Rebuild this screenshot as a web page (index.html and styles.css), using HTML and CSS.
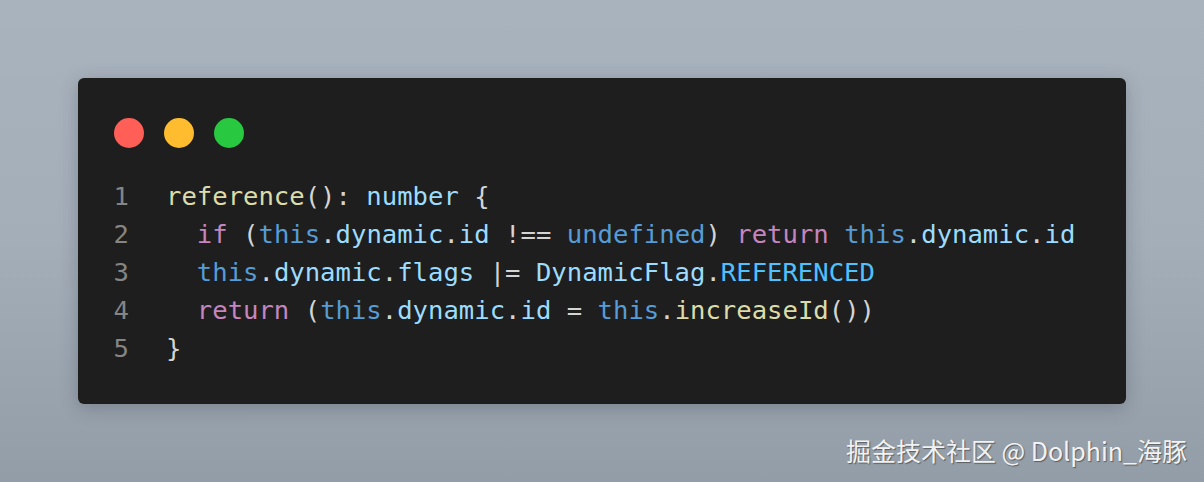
FILE: index.html
```html
<!DOCTYPE html>
<html lang="zh">
<head>
<meta charset="utf-8">
<title>code</title>
<link rel="stylesheet" href="styles.css">
</head>
<body>
<div class="stage">
  <div class="card">
    <div class="dots">
      <span class="dot red"></span>
      <span class="dot yellow"></span>
      <span class="dot green"></span>
    </div>
    <div class="code">
      <div class="line"><span class="ln">1</span><span class="src"><span class="fn">reference</span><span class="p">():</span> <span class="var">number</span> <span class="p">{</span></span></div>
      <div class="line"><span class="ln">2</span><span class="src">  <span class="kw">if</span> <span class="p">(</span><span class="k">this</span><span class="p">.</span><span class="var">dynamic</span><span class="p">.</span><span class="var">id</span> <span class="p">!==</span> <span class="k">undefined</span><span class="p">)</span> <span class="kw">return</span> <span class="k">this</span><span class="p">.</span><span class="var">dynamic</span><span class="p">.</span><span class="var">id</span></span></div>
      <div class="line"><span class="ln">3</span><span class="src">  <span class="k">this</span><span class="p">.</span><span class="var">dynamic</span><span class="p">.</span><span class="var">flags</span> <span class="p">|=</span> <span class="var">DynamicFlag</span><span class="p">.</span><span class="const">REFERENCED</span></span></div>
      <div class="line"><span class="ln">4</span><span class="src">  <span class="kw">return</span> <span class="p">(</span><span class="k">this</span><span class="p">.</span><span class="var">dynamic</span><span class="p">.</span><span class="var">id</span> <span class="p">=</span> <span class="k">this</span><span class="p">.</span><span class="fn">increaseId</span><span class="p">())</span></span></div>
      <div class="line"><span class="ln">5</span><span class="src"><span class="p">}</span></span></div>
    </div>
  </div>
</div>
<div class="watermark">掘金技术社区 @ Dolphin_海豚</div>
</body>
</html>
```
FILE: styles.css
```css
html, body {
  margin: 0;
  padding: 0;
  width: 1204px;
  height: 482px;
  overflow: hidden;
}
body {
  background: linear-gradient(180deg, #a9b3bd 0%, #a4aeb8 50%, #939da7 100%);
  position: relative;
}
.stage {
  padding: 78px 78px 0 78px;
}
.card {
  width: 1048px;
  height: 326px;
  box-sizing: border-box;
  background: #1e1e1e;
  border-radius: 6px;
  padding: 40px 0 0 35px;
  box-shadow: 0 4px 18px rgba(30, 40, 50, 0.25);
}
.dots {
  display: flex;
  gap: 20px;
  margin-left: 1px;
}
.dot {
  width: 30px;
  height: 30px;
  border-radius: 50%;
  display: block;
}
.red { background: #ff5f57; }
.yellow { background: #febc2e; }
.green { background: #28c840; }
.code {
  margin-top: 29px;
  font-family: "DejaVu Sans Mono", "Liberation Mono", monospace;
  font-size: 25.6px;
  line-height: 38px;
  color: #d4d4d4;
}
.line {
  display: flex;
  white-space: pre;
}
.ln {
  width: 16px;
  text-align: right;
  color: #858585;
  margin-right: 37px;
}
.src { white-space: pre; }
.fn { color: #dcdcaa; }
.var { color: #9cdcfe; }
.k { color: #569cd6; }
.kw { color: #c586c0; }
.const { color: #4fc1ff; }
.p { color: #d4d4d4; }
.watermark {
  position: absolute;
  right: 17px;
  top: 433px;
  font-family: "Noto Sans CJK SC", "Noto Sans", sans-serif;
  font-size: 25px;
  line-height: 34px;
  color: #f2f2f2;
  text-shadow: 1px 1px 1px rgba(40, 40, 40, 0.55);
}
```
